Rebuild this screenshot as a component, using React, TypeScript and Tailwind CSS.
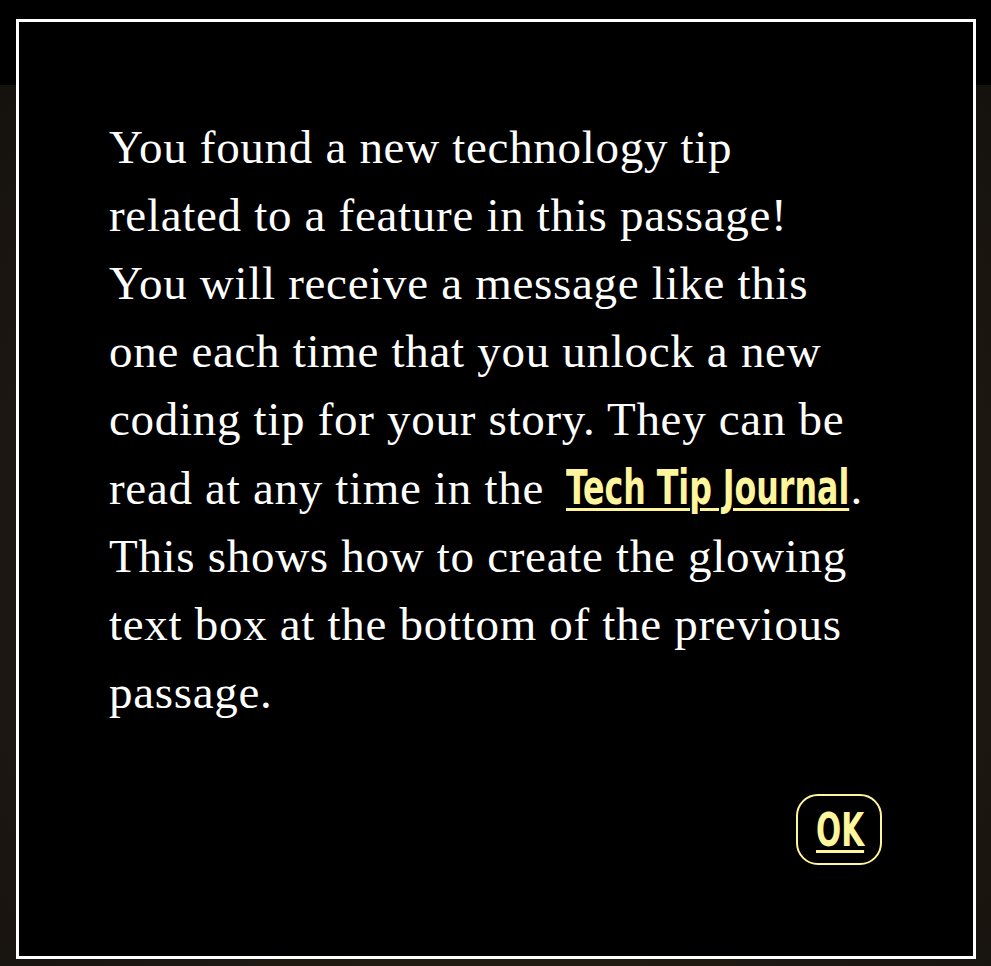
import React from "react"

const serif = "font-['Liberation_Serif',serif]"
const narrow = "font-['DejaVu_Sans_Condensed','Liberation_Sans',sans-serif]"

const lines = [
  "You found a new technology tip",
  "related to a feature in this passage!",
  "You will receive a message like this",
  "one each time that you unlock a new",
  "coding tip for your story. They can be",
]

const after = [
  "This shows how to create the glowing",
  "text box at the bottom of the previous",
  "passage.",
]

export default function App() {
  return (
    <div className="relative w-[991px] h-[966px] overflow-hidden bg-[radial-gradient(circle_at_50%_60%,#2e2519,#1b1610_70%,#120f0b)]">
      <div className="h-[85px] bg-black" />

      {/* tip dialog */}
      <div className="absolute left-[16px] top-[19px] w-[960px] h-[940px] border-[3px] border-white bg-black flex flex-col">
        <div className={`${serif} text-[47px] leading-[68px] tracking-[0.7px] text-white pl-[90px] pt-[91px] whitespace-nowrap`}>
          {lines.map((l) => (
            <div key={l}>{l}</div>
          ))}
          <div>
            read at any time in the{" "}
            <a href="#" className="inline-block w-[284px] ml-[10px] align-baseline">
              <span
                className={`${narrow} inline-block origin-left scale-x-[0.733] font-bold text-[48px] tracking-normal text-[#fff59d] underline decoration-[3px] underline-offset-[4px]`}
              >
                Tech Tip Journal
              </span>
            </a>
            .
          </div>
          {after.map((l) => (
            <div key={l}>{l}</div>
          ))}
        </div>

        <div className="flex justify-end pr-[91px] mt-[68px]">
          <button className="w-[86px] h-[71px] rounded-[22px] border-2 border-[#fff59d] flex items-center justify-center">
            <span className="inline-block w-[47px]">
              <span className={`${narrow} inline-block origin-left scale-x-[0.7] font-bold text-[47px] leading-none text-[#fff59d] underline decoration-[3px] underline-offset-[4px]`}>
                OK
              </span>
            </span>
          </button>
        </div>
      </div>
    </div>
  )
}
